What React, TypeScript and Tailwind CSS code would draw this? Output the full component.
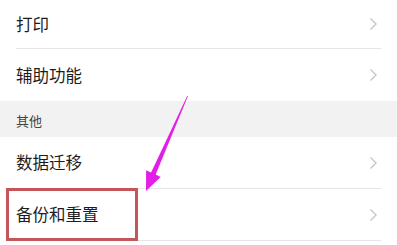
import type { ReactNode } from 'react'

const font = { fontFamily: '"Noto Sans CJK SC", "Noto Sans", sans-serif' }

function Chevron() {
  return (
    <svg width="9" height="14" viewBox="0 0 9 14" className="shrink-0">
      <polyline points="1.5,1.5 7,7 1.5,12.5" fill="none" stroke="#c6c6c6" strokeWidth="1.4" />
    </svg>
  )
}

function Row({ label, height }: { label: string; height: string }) {
  return (
    <div className={`flex items-center justify-between pl-4 pr-[19px] ${height}`}>
      <span className="text-[16.5px] text-[#1c1c1c]">{label}</span>
      <Chevron />
    </div>
  )
}

function Divider() {
  return <div className="mx-4 h-px bg-[#e6e6e6]" />
}

function Section({ children }: { children: ReactNode }) {
  return <div className="bg-white">{children}</div>
}

export default function App() {
  return (
    <div className="relative w-[397px] h-[245px] overflow-hidden bg-white" style={font}>
      <Section>
        <Row label="打印" height="h-[48px]" />
        <Divider />
        <Row label="辅助功能" height="h-[52px]" />
      </Section>
      <div className="flex h-[36px] items-center bg-[#f2f2f3] pl-4 pt-[3px] text-[13px] text-[#444]">其他</div>
      <Section>
        <Row label="数据迁移" height="h-[51px]" />
        <Divider />
        <Row label="备份和重置" height="h-[51px]" />
        <Divider />
      </Section>

      <div className="absolute left-[6px] top-[188px] h-[53px] w-[132px] border-[3px] border-[#c4555a]" />

      <svg className="absolute left-0 top-0" width="397" height="245" viewBox="0 0 397 245">
        <polygon
          points="188,96 155.7,174.6 160.7,177 146,191 146.1,170.3 151.1,172.6 187.2,96"
          fill="#e21fe6"
        />
      </svg>
    </div>
  )
}
